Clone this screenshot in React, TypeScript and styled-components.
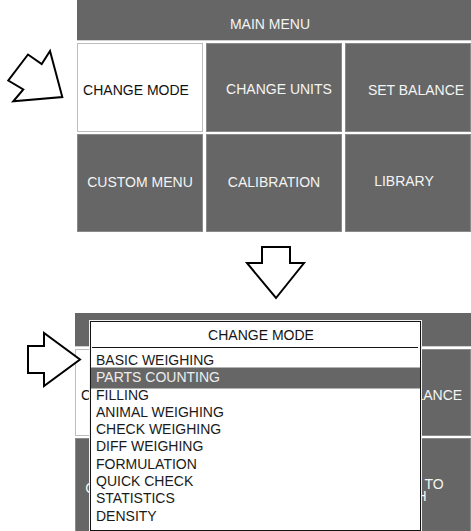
import React from "react";
import styled, { createGlobalStyle } from "styled-components";

const GlobalStyle = createGlobalStyle`
  html, body {
    margin: 0;
    padding: 0;
    background: #ffffff;
  }
  body {
    font-family: "Liberation Sans", Arial, sans-serif;
    width: 471px;
    height: 531px;
    overflow: hidden;
  }
`;

const Page = styled.div`
  display: flex;
  flex-direction: column;
  width: 471px;
  height: 531px;
  overflow: hidden;
  background: #ffffff;
`;

const Section = styled.section<{ $h: number }>`
  display: flex;
  flex: 0 0 ${(p) => p.$h}px;
  height: ${(p) => p.$h}px;
  align-items: flex-start;
`;

const ArrowArt = styled.svg`
  flex: 0 0 auto;
  display: block;
  overflow: visible;
  position: relative;
  z-index: 2;
`;

const Stage = styled.div`
  position: relative;
  flex: 0 0 auto;
`;

const MenuPanel = styled.div<{ $cols: string; $rows: string }>`
  display: grid;
  grid-template-columns: ${(p) => p.$cols};
  grid-template-rows: ${(p) => p.$rows};
  column-gap: 3px;
  row-gap: 2px;
  background: #ffffff;
  font-size: 14px;
`;

const MenuHeader = styled.div<{ $top: number }>`
  grid-column: 1 / -1;
  background: #666666;
  color: #f4f4f4;
  display: flex;
  align-items: center;
  justify-content: center;
  padding: ${(p) => p.$top}px 8px 0 0;
  box-sizing: border-box;
  border-bottom: 1px solid #d0d0d0;
`;

const MenuCell = styled.div<{ $active?: boolean; $dx: number; $dy: number }>`
  display: flex;
  align-items: center;
  justify-content: center;
  text-align: center;
  box-sizing: border-box;
  line-height: 12px;
  background: ${(p) => (p.$active ? "#ffffff" : "#666666")};
  color: ${(p) => (p.$active ? "#111111" : "#f4f4f4")};
  border: 1px solid ${(p) => (p.$active ? "#bdbdbd" : "#8a8a8a")};
  padding-left: ${(p) => Math.max(0, p.$dx * 2)}px;
  padding-right: ${(p) => Math.max(0, -p.$dx * 2)}px;
  padding-top: ${(p) => Math.max(0, p.$dy * 2)}px;
  padding-bottom: ${(p) => Math.max(0, -p.$dy * 2)}px;
  white-space: pre-line;
`;

const Dialog = styled.div`
  position: absolute;
  left: 14px;
  top: 7px;
  width: 333px;
  height: 212px;
  box-sizing: border-box;
  background: #ffffff;
  border: 1px solid #f2f2f2;
  box-shadow: inset 0 0 0 1px #141414;
  padding: 1px;
  display: flex;
  flex-direction: column;
  font-size: 14px;
  z-index: 1;
`;

const DialogTitle = styled.div`
  height: 24px;
  margin: 0 2px 0 1px;
  border-bottom: 1px solid #141414;
  display: flex;
  align-items: center;
  justify-content: center;
  padding-left: 12px;
  padding-top: 1px;
  box-sizing: content-box;
  color: #141414;
`;

const OptionList = styled.ul`
  list-style: none;
  margin: 4px 0 0;
  padding: 0;
`;

const Option = styled.li<{ $selected?: boolean }>`
  height: 17.3px;
  line-height: 17.3px;
  padding-left: 5px;
  white-space: nowrap;
  color: ${(p) => (p.$selected ? "#eeeeee" : "#1a1a1a")};
  background: ${(p) => (p.$selected ? "#666666" : "transparent")};
  box-shadow: ${(p) =>
    p.$selected ? "0 -1.5px 0 #666666, 0 1.5px 0 #666666" : "none"};
`;

type Cell = { id: string; label: string; active?: boolean; dx: number; dy: number };

const topCells: Cell[] = [
  { id: "mode", label: "CHANGE MODE", active: true, dx: -4, dy: 2.5 },
  { id: "units", label: "CHANGE UNITS", dx: 5, dy: 1.5 },
  { id: "balance", label: "SET BALANCE", dx: 8, dy: 2.5 },
  { id: "custom", label: "CUSTOM MENU", dx: 0, dy: -1.5 },
  { id: "cal", label: "CALIBRATION", dx: 0, dy: -1.5 },
  { id: "lib", label: "LIBRARY", dx: -4, dy: -2.5 },
];

/* The second menu sits under the dialog: only the labels whose edges show are written. */
const bottomCells: Cell[] = [
  { id: "mode", label: "CHANGE MODE", active: true, dx: -4, dy: 2.5 },
  { id: "units", label: "", dx: 0, dy: 0 },
  { id: "balance", label: "SET BALANCE", dx: 7, dy: 2 },
  { id: "custom", label: "CUSTOM MENU", dx: 0, dy: -1.5 },
  { id: "cal", label: "", dx: 0, dy: 0 },
  { id: "return", label: "RETURN TO\nWEIGH", dx: -4, dy: 0 },
];

const modes = [
  "BASIC WEIGHING",
  "PARTS COUNTING",
  "FILLING",
  "ANIMAL WEIGHING",
  "CHECK WEIGHING",
  "DIFF WEIGHING",
  "FORMULATION",
  "QUICK CHECK",
  "STATISTICS",
  "DENSITY",
];

function Menu({
  cols,
  rows,
  headerTop,
  title,
  cells,
}: {
  cols: string;
  rows: string;
  headerTop: number;
  title: string;
  cells: Cell[];
}) {
  return (
    <MenuPanel $cols={cols} $rows={rows}>
      <MenuHeader $top={headerTop}>{title}</MenuHeader>
      {cells.map((c) => (
        <MenuCell key={c.id} $active={c.active} $dx={c.dx} $dy={c.dy}>
          {c.label}
        </MenuCell>
      ))}
    </MenuPanel>
  );
}

export default function App() {
  return (
    <>
      <GlobalStyle />
      <Page>
        <Section $h={232}>
          <ArrowArt width={77} height={232} viewBox="0 0 77 232">
            <polygon
              points="50,51 41.7,64 28,54.5 8.3,80.5 23.3,89.5 13.3,101.3 62.3,97"
              fill="#ffffff"
              stroke="#000000"
              strokeWidth={2}
              strokeLinejoin="miter"
            />
          </ArrowArt>
          <Stage>
            <Menu
              cols="126px 136px 126px"
              rows="41px 89px 98px"
              headerTop={7}
              title="MAIN MENU"
              cells={topCells}
            />
          </Stage>
        </Section>
        <Section $h={81}>
          <ArrowArt width={471} height={81} viewBox="0 0 471 81">
            <polygon
              points="262,15 290,15 290,31 304,31 276,66 247,31 262,31"
              fill="#ffffff"
              stroke="#000000"
              strokeWidth={2}
              strokeLinejoin="miter"
            />
          </ArrowArt>
        </Section>
        <Section $h={218}>
          <ArrowArt width={75} height={218} viewBox="0 0 75 218">
            <polygon
              points="28,33 44,33 44,20 80,46.5 44,73 44,60 28,60"
              fill="#ffffff"
              stroke="#000000"
              strokeWidth={2}
              strokeLinejoin="miter"
            />
          </ArrowArt>
          <Stage>
            <Menu
              cols="126px 136px 128px"
              rows="34px 87px 103px"
              headerTop={0}
              title=""
              cells={bottomCells}
            />
            <Dialog>
              <DialogTitle>CHANGE MODE</DialogTitle>
              <OptionList>
                {modes.map((m) => (
                  <Option key={m} $selected={m === "PARTS COUNTING"}>
                    {m}
                  </Option>
                ))}
              </OptionList>
            </Dialog>
          </Stage>
        </Section>
      </Page>
    </>
  );
}
